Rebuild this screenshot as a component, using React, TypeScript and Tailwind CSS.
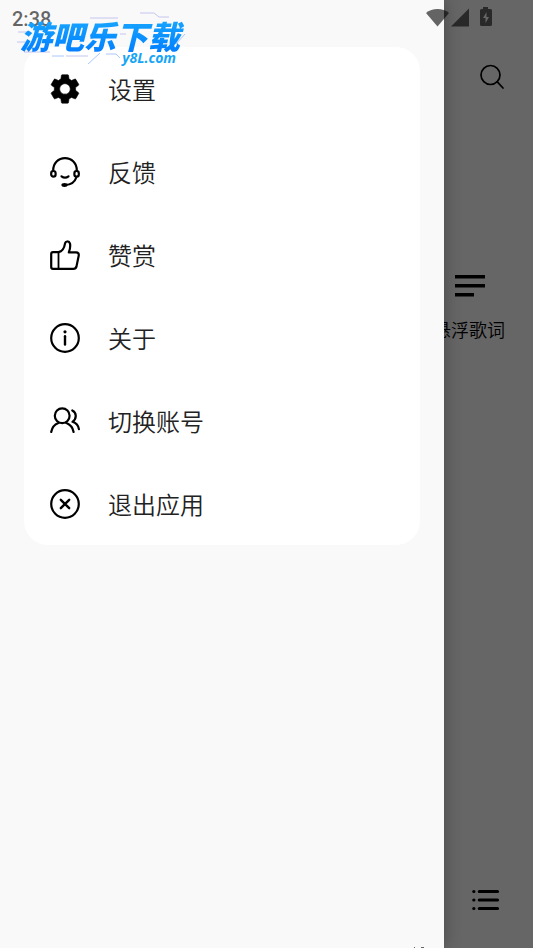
import React from 'react';

interface MenuItem {
  label: string;
  icon: React.ReactNode;
}

const Icon: React.FC<{ children: React.ReactNode }> = ({ children }) => (
  <svg
    viewBox="0 0 30 30"
    className="size-[30px] shrink-0"
    fill="none"
    stroke="black"
    strokeWidth="2.2"
    strokeLinecap="round"
    strokeLinejoin="round"
    aria-hidden="true"
  >
    {children}
  </svg>
);

const menuItems: MenuItem[] = [
  {
    label: '设置',
    icon: (
      <Icon>
        <path
          transform="translate(-2.8 -2.8) scale(1.48)"
          fill="black"
          stroke="black"
          strokeWidth="0.4"
          d="M19.14 12.94c.04-.3.06-.61.06-.94 0-.32-.02-.64-.07-.94l2.03-1.58c.18-.14.23-.41.12-.61l-1.92-3.32c-.12-.22-.37-.29-.59-.22l-2.39.96c-.5-.38-1.03-.7-1.62-.94l-.36-2.54c-.04-.24-.24-.41-.48-.41h-3.84c-.24 0-.43.17-.47.41l-.36 2.54c-.59.24-1.13.57-1.62.94l-2.39-.96c-.22-.08-.47 0-.59.22L2.74 8.87c-.12.21-.08.47.12.61l2.03 1.58c-.05.3-.09.63-.09.94s.02.64.07.94l-2.03 1.58c-.18.14-.23.41-.12.61l1.92 3.32c.12.22.37.29.59.22l2.39-.96c.5.38 1.03.7 1.62.94l.36 2.54c.05.24.24.41.48.41h3.84c.24 0 .44-.17.47-.41l.36-2.54c.59-.24 1.13-.56 1.62-.94l2.39.96c.22.08.47 0 .59-.22l1.92-3.32c.12-.22.07-.47-.12-.61l-2.01-1.58zM12 15.6c-1.98 0-3.6-1.62-3.6-3.6s1.62-3.6 3.6-3.6 3.6 1.62 3.6 3.6-1.62 3.6-3.6 3.6z"
        />
      </Icon>
    ),
  },
  {
    label: '反馈',
    icon: (
      <Icon>
        <path d="M3.2 13.5C3.2 6 8.4 1.2 15 1.2S26.800 6 26.800 13.500" />
        <rect x="1.200" y="14" width="4.400" height="5.600" rx="2.200" />
        <rect x="24.400" y="14" width="4.400" height="5.600" rx="2.200" />
        <path d="M11.500 19.300c2 1.600 5 1.600 7 0M26.300 20.500c-1.500 4.500-5.300 7.300-11 7.500" />
        <ellipse cx="14.500" cy="28" rx="2" ry="0.800" fill="black" />
      </Icon>
    ),
  },
  {
    label: '赞赏',
    icon: (
      <Icon>
        <path d="M8.500 12.200h-5.500a1.800 1.800 0 0 0-1.800 1.800v13a1.800 1.800 0 0 0 1.800 1.800h20.500c1.600 0 2.600-.9 3-2.400l2.200-10.700c.4-2-.7-3.300-2.500-3.300h-7.400c1.300-3.400 1.800-6.500 1.100-9-.8-2.600-4.300-2.600-4.900.2-.7 4.400-2.500 7.800-6.500 8.600z" />
        <path d="M8.500 12.200v16.500" strokeWidth="1.800" />
      </Icon>
    ),
  },
  {
    label: '关于',
    icon: (
      <Icon>
        <circle cx="15" cy="15" r="13.800" />
        <path d="M15 13.300v8.200" strokeWidth="2.400" />
        <circle cx="15" cy="8.800" r="1.600" fill="black" stroke="none" />
      </Icon>
    ),
  },
  {
    label: '切换账号',
    icon: (
      <Icon>
        <circle cx="12.200" cy="9.800" r="7.400" />
        <path d="M1.200 26c.8-4.500 3.600-7.600 7.200-9M16 16.800c3.800 1.500 6.800 4.700 7.600 9.200M22.300 4.500c4.300 2 4.800 7.900.2 11.300 3.400 1.100 5.900 3.700 6.400 7.400" />
      </Icon>
    ),
  },
  {
    label: '退出应用',
    icon: (
      <Icon>
        <circle cx="15" cy="15" r="13.800" />
        <path d="M10.800 10.800l8.400 8.400M19.200 10.800l-8.400 8.400" strokeWidth="2.400" />
      </Icon>
    ),
  },
];

// Player page that sits behind the drawer
const HomePage: React.FC = () => (
  <main className="flex min-h-screen flex-col items-end bg-white">
    <button type="button" aria-label="搜索" className="mt-16 mr-7">
      <svg viewBox="0 0 26 26" className="size-[26px]" fill="none" stroke="black" strokeWidth="1.7" strokeLinecap="round">
        <circle cx="11.500" cy="11" r="9.500" />
        <path d="M18.300 17.800l5.700 6.200" />
      </svg>
    </button>
    <button type="button" className="mt-[184px] mr-7 flex flex-col items-center gap-[19px] text-lg text-black">
      <svg viewBox="0 0 30 24" className="ml-0.5 h-6 w-[30px]" fill="black" aria-hidden="true">
        <path d="M0 1h30v3.500H0zM0 10h30v3.500H0zM0 19h19v3.500H0z" />
      </svg>
      <span className="leading-6 font-[350]">悬浮歌词</span>
    </button>
    <button type="button" aria-label="播放列表" className="mt-auto mr-8 mb-9">
      <svg viewBox="0 0 30 24" className="h-6 w-[30px]" stroke="black" strokeWidth="3.200" strokeLinecap="round">
        <path d="M2.800 3.500h.1M8.300 3.500h18.200M2.800 12h.1M8.300 12h18.200M2.800 20.500h.1M8.300 20.500h18.200" />
      </svg>
    </button>
  </main>
);

const Drawer: React.FC = () => (
  <aside className="absolute inset-y-0 left-0 flex w-5/6 flex-col justify-between bg-[#f9f9f9] px-6 pt-[47px] shadow-[0_0_16px_rgba(0,0,0,0.3)]">
    <nav className="rounded-3xl bg-white">
      <ul>
        {menuItems.map((item) => (
          <li key={item.label}>
            <button
              type="button"
              className="flex h-[83px] w-full items-center gap-7 px-[26px] text-left text-2xl font-[350] text-[#222]"
            >
              {item.icon}
              <span>{item.label}</span>
            </button>
          </li>
        ))}
      </ul>
    </nav>
    <svg viewBox="0 0 12 1" className="mr-[-5px] h-px w-3 self-end" fill="#666" aria-hidden="true">
      <path d="M1 0h1v1H1zM8 0h3v1H8z" />
    </svg>
  </aside>
);

const StatusBar: React.FC = () => (
  <header className="absolute inset-x-0 top-0 flex h-[38px] items-center justify-between pr-10 pl-3">
    <time className="font-[Roboto,sans-serif] text-xl font-medium text-black/60">2:38</time>
    <svg viewBox="0 0 68 24" className="mb-1 h-6 w-[68px]" fill="black" fillOpacity="0.6" aria-hidden="true">
      <path d="M1 8C7 2.500 18 2.500 24 8L12.500 21.500z" />
      <path d="M44 3.500v18H26z" />
      <path
        fillRule="evenodd"
        d="M58 2h5v2h2.500q1.500 0 1.500 1.500v14q0 1.500-1.500 1.500h-9q-1.500 0-1.500-1.500v-14q0-1.500 1.500-1.500H58zM61.500 7l-3.500 6h2.500v5l3.500-6H61.500z"
      />
    </svg>
  </header>
);

const Watermark: React.FC = () => (
  <div className="pointer-events-none absolute top-3 left-4 flex flex-col">
    <svg viewBox="0 0 170 54" className="absolute top-0 left-0 h-[54px] w-[170px]" fill="none" stroke="#c5c5f0" strokeWidth="1" aria-hidden="true">
      <path d="M74 6h28M124 1h14l5 4h10M2 20h12M1 30h10M8 40h26M50 44h22M104 22h6" />
      <path d="M72 52l12-11M36 44h12M160 32l9-10M90 42h10l4 4" stroke="#a8c8ff" />
    </svg>
    <span className="relative bg-linear-to-b from-[#20aeff] to-[#057cff] bg-clip-text px-1 pt-1 text-[32px] leading-[38px] font-black text-transparent italic">
      游吧乐下载
    </span>
    <span className="absolute top-[38px] right-2 font-['Open_Sans',sans-serif] text-sm leading-4 font-bold text-[#18a5f5] italic">
      y8L.com
    </span>
  </div>
);

const App: React.FC = () => {
  return (
    <div className="relative min-h-screen overflow-hidden font-['Noto_Sans_CJK_SC',sans-serif]">
      <HomePage />
      <div className="absolute inset-0 bg-black/60" />
      <Drawer />
      <StatusBar />
      <Watermark />
    </div>
  );
};

export default App;
